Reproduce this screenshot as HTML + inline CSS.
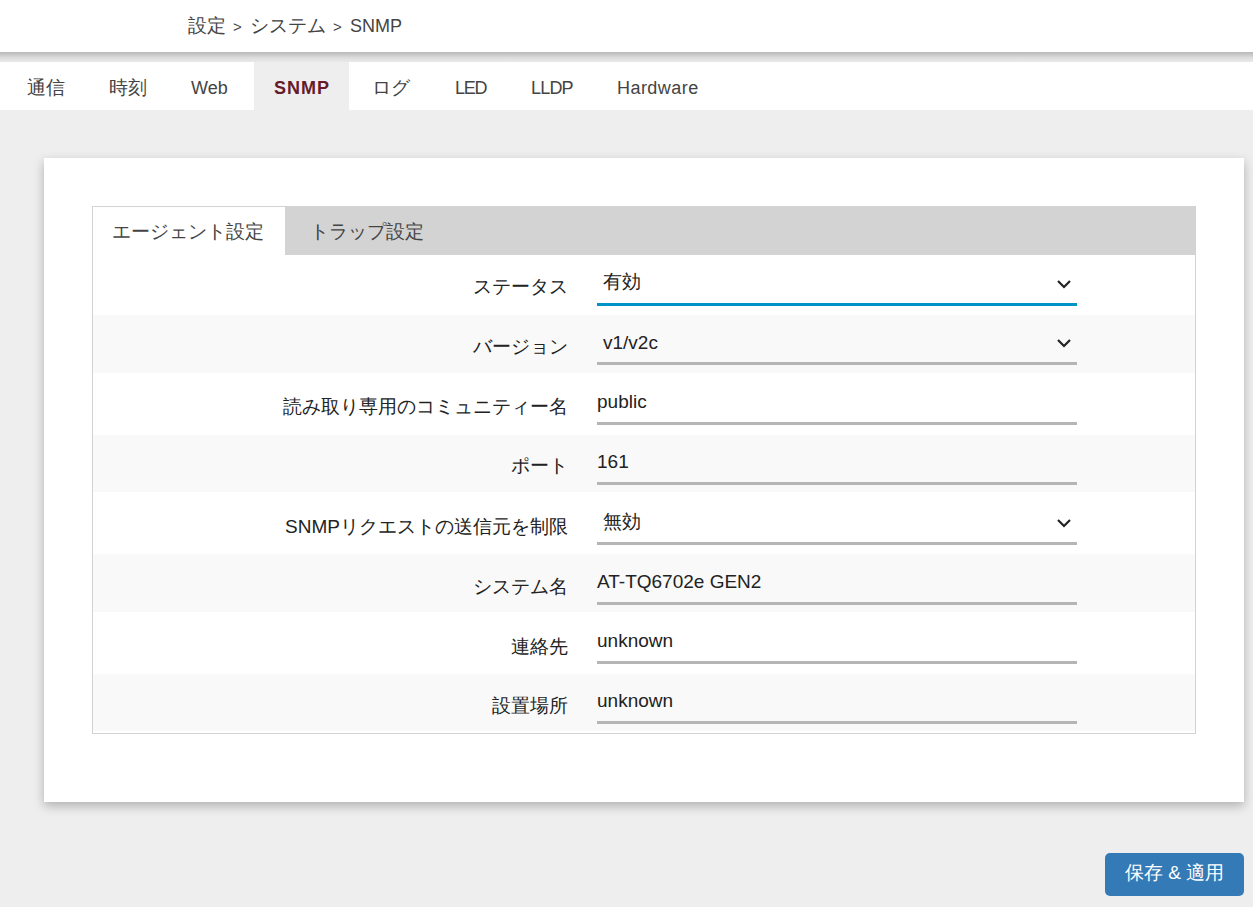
<!DOCTYPE html>
<html lang="ja">
<head>
<meta charset="utf-8">
<style>
html,body{margin:0;padding:0;}
body{width:1253px;height:907px;overflow:hidden;position:relative;background:#eeeeee;font-family:"Liberation Sans",sans-serif;color:#222;}
.a{position:absolute;white-space:nowrap;line-height:1;}
#hdr{left:0;top:0;width:1253px;height:52px;background:#fff;}
#shd{left:0;top:52px;width:1253px;height:10px;background:linear-gradient(#b9b9b9,#c8c8c8 25%,#dedede 60%,#e9e9e9);}
.bc{top:16px;font-size:18px;color:#444;}
.gt{font-size:15px;top:19px;}
#tabs{left:0;top:62px;width:1253px;height:48px;background:#fff;}
#act{left:254px;top:62px;width:95px;height:48px;background:#eeeeee;}
.tb{top:79px;font-size:18px;color:#444;}
#card{left:44px;top:158px;width:1200px;height:644px;background:#fff;box-shadow:0 4px 10px rgba(0,0,0,.26);}
#panel{left:92px;top:206px;width:1102px;height:526px;border:1px solid #d3d3d3;background:#fff;}
#ph{left:93px;top:207px;width:1102px;height:48px;background:#d3d3d3;}
#pa{left:93px;top:207px;width:192px;height:48px;background:#fff;}
.pt{top:222px;font-size:19px;color:#444;}
.row{left:93px;width:1102px;}
.st{background:#f9f9f9;}
.lb{font-size:19px;color:#222;text-align:right;width:400px;left:168px;}
.vl{font-size:19px;color:#222;}
.ul{left:597px;width:480px;height:3px;background:#b5b5b5;}
.chev{left:1056px;width:16px;height:10px;}
#btn{left:1105px;top:853px;width:139px;height:43px;background:#337ab7;border-radius:5px;}
#btnt{left:1105px;top:863px;width:139px;text-align:center;font-size:19px;color:#fff;}
</style>
</head>
<body>
<div class="a" id="hdr"></div>
<div class="a bc" style="left:188px;font-size:19px;top:16px">設定</div>
<div class="a bc gt" style="left:233px">&gt;</div>
<div class="a bc" style="left:250px;font-size:19px;top:16px">システム</div>
<div class="a bc gt" style="left:333px">&gt;</div>
<div class="a bc" style="left:350px;top:17px">SNMP</div>
<div class="a" id="shd"></div>
<div class="a" id="tabs"></div>
<div class="a" id="act"></div>
<div class="a tb" style="left:27px;font-size:19px;top:78px">通信</div>
<div class="a tb" style="left:109px;font-size:19px;top:78px">時刻</div>
<div class="a tb" style="left:191px">Web</div>
<div class="a tb" style="left:274px;font-weight:bold;color:#661a2a;letter-spacing:1px">SNMP</div>
<div class="a tb" style="left:372px;font-size:19px;top:78px">ログ</div>
<div class="a tb" style="left:455px;letter-spacing:-1.2px">LED</div>
<div class="a tb" style="left:531px;letter-spacing:-0.8px">LLDP</div>
<div class="a tb" style="left:617px;letter-spacing:0.45px">Hardware</div>

<div class="a" id="card"></div>
<div class="a" id="panel"></div>
<div class="a" id="ph"></div>
<div class="a" id="pa"></div>
<div class="a pt" style="left:112px">エージェント設定</div>
<div class="a pt" style="left:310px">トラップ設定</div>

<div class="a row" style="top:255px;height:60px"></div>
<div class="a row st" style="top:315px;height:58px"></div>
<div class="a row" style="top:373px;height:62px"></div>
<div class="a row st" style="top:435px;height:57px"></div>
<div class="a row" style="top:492px;height:62px"></div>
<div class="a row st" style="top:554px;height:58px"></div>
<div class="a row" style="top:612px;height:62px"></div>
<div class="a row st" style="top:674px;height:57px"></div>

<div class="a lb" style="top:277px">ステータス</div>
<div class="a lb" style="top:337px">バージョン</div>
<div class="a lb" style="top:397px">読み取り専用のコミュニティー名</div>
<div class="a lb" style="top:456px">ポート</div>
<div class="a lb" style="top:517px">SNMPリクエストの送信元を制限</div>
<div class="a lb" style="top:577px">システム名</div>
<div class="a lb" style="top:637px">連絡先</div>
<div class="a lb" style="top:696px">設置場所</div>

<div class="a vl" style="left:603px;top:272px">有効</div>
<div class="a vl" style="left:603px;top:333px">v1/v2c</div>
<div class="a vl" style="left:597px;top:392px">public</div>
<div class="a vl" style="left:597px;top:452px">161</div>
<div class="a vl" style="left:603px;top:512px">無効</div>
<div class="a vl" style="left:597px;top:572px">AT-TQ6702e GEN2</div>
<div class="a vl" style="left:597px;top:631px">unknown</div>
<div class="a vl" style="left:597px;top:691px">unknown</div>

<div class="a ul" style="top:303px;background:#0093c8"></div>
<div class="a ul" style="top:362px"></div>
<div class="a ul" style="top:422px"></div>
<div class="a ul" style="top:482px"></div>
<div class="a ul" style="top:542px"></div>
<div class="a ul" style="top:602px"></div>
<div class="a ul" style="top:661px"></div>
<div class="a ul" style="top:721px"></div>

<svg class="a chev" style="top:279px" viewBox="0 0 16 10"><path d="M2 2 L8 8 L14 2" fill="none" stroke="#222" stroke-width="2.2"/></svg>
<svg class="a chev" style="top:338px" viewBox="0 0 16 10"><path d="M2 2 L8 8 L14 2" fill="none" stroke="#222" stroke-width="2.2"/></svg>
<svg class="a chev" style="top:518px" viewBox="0 0 16 10"><path d="M2 2 L8 8 L14 2" fill="none" stroke="#222" stroke-width="2.2"/></svg>

<div class="a" id="btn"></div>
<div class="a" id="btnt">保存 &amp; 適用</div>
</body>
</html>
